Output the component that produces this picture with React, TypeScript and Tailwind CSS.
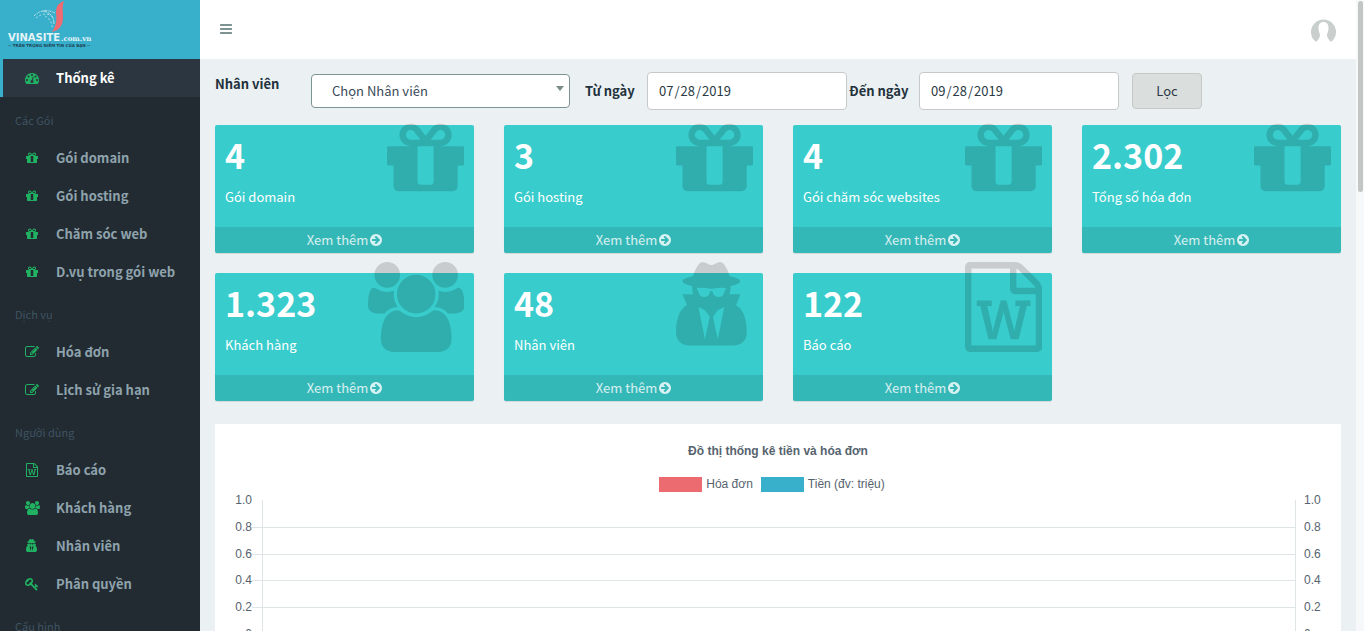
import React from 'react';

type Glyph = { width: number; path: string };

const glyphs: Record<string, Glyph> = {
  gift: {
    width: 1536,
    path: 'M928 1356v-716h-320v716q0 25 18 38.5t46 13.5h192q28 0 46-13.5t18-38.5zm-456-844h195l-126-161q-26-31-69-31-40 0-68 28t-28 68 28 68 68 28zm688-96q0-40-28-68t-68-28q-43 0-69 31l-125 161h194q40 0 68-28t28-68zm376 256v320q0 14-9 23t-23 9h-96v416q0 40-28 68t-68 28h-1088q-40 0-68-28t-28-68v-416h-96q-14 0-23-9t-9-23v-320q0-14 9-23t23-9h440q-93 0-158.5-65.5t-65.5-158.5 65.5-158.5 158.5-65.5q107 0 168 77l128 165 128-165q61-77 168-77 93 0 158.5 65.5t65.5 158.5-65.5 158.5-158.5 65.5h440q14 0 23 9t9 23z',
  },
  users: {
    width: 1920,
    path: 'M593 896q-162 5-265 128h-134q-82 0-138-40.5t-56-118.5q0-353 124-353 6 0 43.5 21t97.5 42.5 119 21.5q67 0 133-23-5 37-5 66 0 139 81 256zm1071 637q0 120-73 189.5t-194 69.5h-874q-121 0-194-69.5t-73-189.5q0-53 3.5-103.5t14-109 26.5-108.5 43-97.5 62-81 85.5-53.5 111.5-20q10 0 43 21.5t73 48 107 48 135 21.5 135-21.5 107-48 73-48 43-21.5q61 0 111.5 20t85.5 53.5 62 81 43 97.5 26.5 108.5 14 109 3.5 103.5zm-1024-1277q0 106-75 181t-181 75-181-75-75-181 75-181 181-75 181 75 75 181zm704 384q0 159-112.5 271.5t-271.5 112.5-271.5-112.5-112.5-271.5 112.5-271.5 271.5-112.5 271.5 112.5 112.5 271.5zm576 225q0 78-56 118.5t-138 40.5h-134q-103-123-265-128 81-117 81-256 0-29-5-66 66 23 133 23 59 0 119-21.5t97.5-42.5 43.5-21q124 0 124 353zm-128-609q0 106-75 181t-181 75-181-75-75-181 75-181 181-75 181 75 75 181z',
  },
  secret: {
    width: 1536,
    path: 'M576 1536l96-448-96-128-128-64zm256 0l128-640-128 64-96 128zm160-1010q-2-4-4-6-10-8-96-8-70 0-167 19-7 2-21 2t-21-2q-97-19-167-19-86 0-96 8-2 2-4 6 2 18 4 27 2 3 7.5 6.5t7.5 10.5q2 4 7.5 20.5t7 20.5 7.5 17 8.5 17 9 14 12 13.5 14 9.5 17.5 8 20.5 4 24.5 2q36 0 59-12.5t32.5-30 14.5-34.5 11.5-29.5 17.5-12.5h12q11 0 17.5 12.5t11.5 29.5 14.5 34.5 32.5 30 59 12.5q13 0 24.5-2t20.5-4 17.5-8 14-9.5 12-13.5 9-14 8.5-17 7.5-17 7-20.5 7.5-20.5q2-7 7.5-10.5t7.5-6.5q2-9 4-27zm416 879q0 121-73 190t-194 69h-874q-121 0-194-69t-73-190q0-61 4.5-118t19-125.5 37.5-123.5 63.5-103.5 93.5-74.5l-90-220h214q-22-64-22-128 0-12 2-32-194-40-194-96 0-57 210-99 17-62 51.5-134t70.5-114q32-37 76-37 30 0 84 31t84 31 84-31 84-31q44 0 76 37 36 42 70.5 114t51.5 134q210 42 210 99 0 56-194 96 7 81-20 160h214l-82 225q63 33 107.5 96.5t65.5 143.5 29 151.5 8 148.5z',
  },
  word: {
    width: 1536,
    path: 'M1468 380q28 28 48 76t20 88v1152q0 40-28 68t-68 28h-1344q-40 0-68-28t-28-68v-1600q0-40 28-68t68-28h896q40 0 88 20t76 48zm-444-244v376h376q-10-29-22-41l-313-313q-12-12-41-22zm384 1528v-1024h-416q-40 0-68-28t-28-68v-416h-768v1536h1280zm-1175-896v107h70l164 661h159l128-485q7-20 10-46 2-16 2-24h4l3 24q1 3 3.5 20t5.5 26l128 485h159l164-661h70v-107h-300v107h90l-99 438q-5 20-7 46l-2 21h-4l-3-21q-1-5-4-21t-5-25l-144-545h-114l-144 545q-2 9-4.5 24.5t-3.5 21.5l-4 21h-4l-2-21q-2-26-7-46l-99-438h90v-107h-300z',
  },
  arrow: {
    width: 1536,
    path: 'M1285 896q0-27-18-45l-91-91-362-362q-18-18-45-18t-45 18l-91 91q-18 18-18 45t18 45l189 189h-502q-26 0-45 19t-19 45v128q0 26 19 45t45 19h502l-189 189q-19 19-19 45t19 45l91 91q18 18 45 18t45-18l362-362 91-91q18-18 18-45zm251 0q0 209-103 385.5t-279.5 279.5-385.5 103-385.5-103-279.5-279.5-103-385.5 103-385.5 279.5-279.5 385.5-103 385.5 103 279.5 279.5 103 385.5z',
  },
  dashboard: {
    width: 1792,
    path: 'M384 1152q0-53-37.5-90.5t-90.5-37.5-90.5 37.5-37.5 90.5 37.5 90.5 90.5 37.5 90.5-37.5 37.5-90.5zm192-448q0-53-37.5-90.5t-90.5-37.5-90.5 37.5-37.5 90.5 37.5 90.5 90.5 37.5 90.5-37.5 37.5-90.5zm428 481l101-382q6-26-7.5-48.5t-38.5-29.5-48 6.5-30 39.5l-101 382q-60 5-107 43.5t-63 98.5q-20 77 20 146t117 89 146-20 89-117q16-60-6-117t-72-91zm660-33q0-53-37.5-90.5t-90.5-37.5-90.5 37.5-37.5 90.5 37.5 90.5 90.5 37.5 90.5-37.5 37.5-90.5zm-640-640q0-53-37.5-90.5t-90.5-37.5-90.5 37.5-37.5 90.5 37.5 90.5 90.5 37.5 90.5-37.5 37.5-90.5zm448 192q0-53-37.5-90.5t-90.5-37.5-90.5 37.5-37.5 90.5 37.5 90.5 90.5 37.5 90.5-37.5 37.5-90.5zm320 448q0 261-141 483-19 29-54 29h-1402q-35 0-54-29-141-221-141-483 0-182 71-348t191-286 286-191 348-71 348 71 286 191 191 286 71 348z',
  },
  edit: {
    width: 1792,
    path: 'M888 1184l116-116-152-152-116 116v56h96v96h56zm440-720q-16-16-33 1l-350 350q-17 17-1 33t33-1l350-350q17-17 1-33zm80 594v190q0 119-84.5 203.5t-203.5 84.5h-832q-119 0-203.5-84.5t-84.5-203.5v-832q0-119 84.5-203.5t203.5-84.5h832q63 0 117 25 15 7 18 23 3 17-9 29l-49 49q-14 14-32 8-23-6-45-6h-832q-66 0-113 47t-47 113v832q0 66 47 113t113 47h832q66 0 113-47t47-113v-126q0-13 9-22l64-64q15-15 35-7t20 29zm-96-738l288 288-672 672h-288v-288zm444 132l-92 92-288-288 92-92q28-28 68-28t68 28l152 152q28 28 28 68t-28 68z',
  },
  key: {
    width: 1792,
    path: 'M832 512q0-80-56-136t-136-56-136 56-56 136q0 42 19 83-41-19-83-19-80 0-136 56t-56 136 56 136 136 56 136-56 56-136q0-42-19-83 41 19 83 19 80 0 136-56t56-136zm851 704q0 17-49 66t-66 49q-9 0-28.5-16t-36.5-33-38.5-40-24.5-26l-96 96 220 220q28 28 28 68 0 42-39 81t-81 39q-40 0-68-28l-671-671q-176 131-365 131-163 0-265.5-102.5t-102.5-265.5q0-160 95-313t248-248 313-95q163 0 265.5 102.5t102.5 265.5q0 189-131 365l355 355 96-96q-3-3-26-24.5t-40-38.5-33-36.5-16-28.5q0-17 49-66t66-49q13 0 23 10 6 6 46 44.5t82 79.5 86.5 86 73 78 28.5 41z',
  },
  bars: {
    width: 1536,
    path: 'M1536 1344v128q0 26-19 45t-45 19h-1408q-26 0-45-19t-19-45v-128q0-26 19-45t45-19h1408q26 0 45 19t19 45zm0-512v128q0 26-19 45t-45 19h-1408q-26 0-45-19t-19-45v-128q0-26 19-45t45-19h1408q26 0 45 19t19 45zm0-512v128q0 26-19 45t-45 19h-1408q-26 0-45-19t-19-45v-128q0-26 19-45t45-19h1408q26 0 45 19t19 45z',
  },
};

const menu = [
  { title: null, items: [{ label: 'Thống kê', icon: 'dashboard', active: true }] },
  {
    title: 'Các Gói',
    items: [
      { label: 'Gói domain', icon: 'gift' },
      { label: 'Gói hosting', icon: 'gift' },
      { label: 'Chăm sóc web', icon: 'gift' },
      { label: 'D.vụ trong gói web', icon: 'gift' },
    ],
  },
  {
    title: 'Dịch vụ',
    items: [
      { label: 'Hóa đơn', icon: 'edit' },
      { label: 'Lịch sử gia hạn', icon: 'edit' },
    ],
  },
  {
    title: 'Người dùng',
    items: [
      { label: 'Báo cáo', icon: 'word' },
      { label: 'Khách hàng', icon: 'users' },
      { label: 'Nhân viên', icon: 'secret' },
      { label: 'Phân quyền', icon: 'key' },
    ],
  },
  { title: 'Cấu hình', items: [] },
] as { title: string | null; items: { label: string; icon: string; active?: boolean }[] }[];

const stats = [
  { value: '4', label: 'Gói domain', icon: 'gift' },
  { value: '3', label: 'Gói hosting', icon: 'gift' },
  { value: '4', label: 'Gói chăm sóc websites', icon: 'gift' },
  { value: '2.302', label: 'Tổng số hóa đơn', icon: 'gift' },
  { value: '1.323', label: 'Khách hàng', icon: 'users' },
  { value: '48', label: 'Nhân viên', icon: 'secret' },
  { value: '122', label: 'Báo cáo', icon: 'word' },
];

const ticks = ['1.0', '0.8', '0.6', '0.4', '0.2', '0'];
const gridLines = [27, 54, 80, 107, 134];

function Icon({ name, className }: { name: string; className: string }) {
  const glyph = glyphs[name];
  return (
    <svg viewBox={`0 0 ${glyph.width} 1792`} className={className} fill="currentColor" aria-hidden="true">
      <path d={glyph.path} />
    </svg>
  );
}

function Logo() {
  return (
    <svg viewBox="0 0 100 52" className="h-[52px] w-[100px]" role="img" aria-label="VINASITE.com.vn">
      <path d="M64 1C58 3 56 7 56 13C57 21 56 26 52 32C60 30 63 25 63 17C63 10 62 6 64 1Z" fill="#ee6b72" />
      <g fill="none" stroke="#b5dfe6">
        <path d="M34 16Q43 7 55 13" strokeDasharray="3 1" />
        <path d="M36 18Q46 10 54 18" strokeDasharray="2 2" />
        <path d="M43 11Q54 13 54 24" strokeDasharray="4 1" />
        <path d="M45 16Q53 21 52 28" strokeDasharray="2 2" />
      </g>
      <text x="8" y="41" fontSize="10" fontWeight="bold" fill="#e3f3f6" fontFamily="DejaVu Sans, sans-serif">
        VINASITE
      </text>
      <text x="61" y="41" fontSize="7" fontWeight="bold" fill="#e3f3f6" fontFamily="DejaVu Serif, serif">
        .com.vn
      </text>
      <text x="8" y="47" fontSize="4" fontWeight="bold" fill="#1d4457" fontFamily="DejaVu Sans, sans-serif">
        -- TRÂN TRỌNG NIỀM TIN CỦA BẠN --
      </text>
    </svg>
  );
}

function Sidebar() {
  return (
    <aside className="w-[200px] shrink-0 overflow-hidden bg-[#222b32]">
      <a href="#" className="block h-[59px] bg-[#38b0cc]">
        <Logo />
      </a>
      <nav>
        {menu.map((group, index) => (
          <div key={index}>
            {group.title && (
              <h4 className="px-[15px] pt-[14px] pb-[10px] text-[11px] leading-[18px] text-[#3f5361]">
                {group.title}
              </h4>
            )}
            {group.items.map((item) => (
              <a
                key={item.label}
                href="#"
                className={`flex h-[38px] items-center gap-[14px] border-l-3 pl-[19px] text-[13px] font-bold ${
                  item.active
                    ? 'border-[#38b0cc] bg-[#2b3640] text-white'
                    : 'border-transparent text-[#8fa3ad] hover:text-white'
                }`}
              >
                <span className="flex w-5 justify-center pb-px text-[#20b262]">
                  <Icon name={item.icon} className="h-[14px]" />
                </span>
                {item.label}
              </a>
            ))}
          </div>
        ))}
      </nav>
    </aside>
  );
}

function Topbar() {
  return (
    <header className="flex h-[59px] items-center justify-between bg-white px-5">
      <button type="button" aria-label="Menu" className="pb-[2px] text-[#7f9292]">
        <Icon name="bars" className="h-[14px]" />
      </button>
      <button type="button" aria-label="Tài khoản" className="mt-1">
        <svg viewBox="0 0 26 26" className="size-[26px]" aria-hidden="true">
          <circle cx="13.5" cy="13" r="12.5" fill="#c9cfcd" />
          <path
            d="M13.500 3C10.500 3 8.500 5 8.500 9C8.500 13 10 14 10 17C9 19 9 20 6 23H1V26H26V23H21C18 20 18 19 17 17C17 14 18.500 13 18.500 9C18.500 5 16.500 3 13.500 3Z"
            fill="#fff"
          />
        </svg>
      </button>
    </header>
  );
}

function Filters() {
  const dateClass =
    'h-[38px] w-[200px] rounded border border-[#c8c8c8] bg-white px-[10px] text-[13px] text-[#2b3a45] [&::-webkit-calendar-picker-indicator]:hidden';

  return (
    <form className="flex items-center pt-[13px] pb-[15px] text-[13px] text-[#22313b]" onSubmit={(e) => e.preventDefault()}>
      <label htmlFor="staff" className="w-24 self-start pt-[2px] font-bold">
        Nhân viên
      </label>
      <div className="relative w-[259px]">
        <select
          id="staff"
          className="h-[34px] w-full appearance-none rounded border border-[#7d9494] bg-white pl-5 text-[13px] text-[#3a4a58]"
        >
          <option>Chọn Nhân viên</option>
        </select>
        <span className="pointer-events-none absolute top-3 right-[6px] border-x-4 border-t-[5px] border-x-transparent border-t-[#7d8b8b]" />
      </div>
      <label htmlFor="from" className="ml-[15px] w-[62px] font-bold">
        Từ ngày
      </label>
      <input id="from" type="date" defaultValue="2019-07-28" className={dateClass} />
      <label htmlFor="to" className="ml-[2px] w-[70px] font-bold">
        Đến ngày
      </label>
      <input id="to" type="date" defaultValue="2019-09-28" className={dateClass} />
      <button
        type="submit"
        className="ml-[13px] h-9 w-[70px] rounded border border-[#c6c9c6] bg-[#dadedd] text-[13px] text-[#2b3a45]"
      >
        Lọc
      </button>
    </form>
  );
}

function StatCard({ value, label, icon }: { value: string; label: string; icon: string }) {
  return (
    <div className="relative rounded-xs bg-[#39cccc] text-white shadow-[0_1px_1px_rgba(0,0,0,0.1)]">
      <div className="h-[102px] px-[10px] pt-2">
        <h3 className="text-[34px] leading-[44px] font-bold">{value}</h3>
        <p className="mt-[10px] text-[13px] leading-5">{label}</p>
      </div>
      <Icon name={icon} className="absolute -top-[11px] right-[10px] h-[90px] text-black/15" />
      <a
        href="#"
        className="flex h-[26px] items-center justify-center gap-[2px] rounded-b-xs bg-black/10 text-[13px] text-white/80 hover:text-white"
      >
        Xem thêm
        <Icon name="arrow" className="h-[14px]" />
      </a>
    </div>
  );
}

function Chart() {
  return (
    <section className="mt-[23px] bg-white px-5 pt-5 font-['Liberation_Sans',sans-serif] text-[12px] leading-[15px] text-[#56636e]">
      <h2 className="text-center font-bold">Đồ thị thống kê tiền và hóa đơn</h2>
      <ul className="mt-[18px] mr-3 flex justify-center gap-2">
        <li className="flex gap-1">
          <span className="h-[15px] w-[43px] bg-[#ec6b70]" />
          Hóa đơn
        </li>
        <li className="flex gap-1">
          <span className="h-[15px] w-[43px] bg-[#38b0cc]" />
          Tiền (đv: triệu)
        </li>
      </ul>
      <div className="flex items-start pt-px">
        <div className="flex h-[149px] w-[17px] flex-col justify-between text-right">
          {ticks.map((tick) => (
            <span key={tick}>{tick}</span>
          ))}
        </div>
        <svg className="mt-[7px] h-[200px] min-w-0 flex-1" stroke="#dfe4e7" aria-hidden="true">
          {gridLines.map((y) => (
            <line key={y} x1="0" x2="100%" y1={y + 0.5} y2={y + 0.5} />
          ))}
          <line x1="10.5" x2="10.5" y1="0" y2="100%" />
          <line x1="100%" x2="100%" y1="0" y2="100%" strokeWidth="2" />
        </svg>
        <div className="ml-2 flex h-[149px] w-[17px] flex-col justify-between">
          {ticks.map((tick) => (
            <span key={tick}>{tick}</span>
          ))}
        </div>
      </div>
    </section>
  );
}

export default function App() {
  return (
    <div className="flex h-screen overflow-hidden bg-[#ebf0f3] font-['Noto_Sans_CJK_SC','Noto_Sans',sans-serif]">
      <Sidebar />
      <div className="min-w-0 flex-1">
        <Topbar />
        <main className="px-[15px]">
          <Filters />
          <div className="grid grid-cols-4 gap-x-[30px] gap-y-5">
            {stats.map((stat) => (
              <StatCard key={stat.label} {...stat} />
            ))}
          </div>
          <Chart />
        </main>
      </div>
      <div className="w-2 shrink-0 bg-[#f6f8f9] px-px pt-px">
        <div className="ml-px h-[191px] rounded-full bg-[#c3c6c4]" />
      </div>
    </div>
  );
}
